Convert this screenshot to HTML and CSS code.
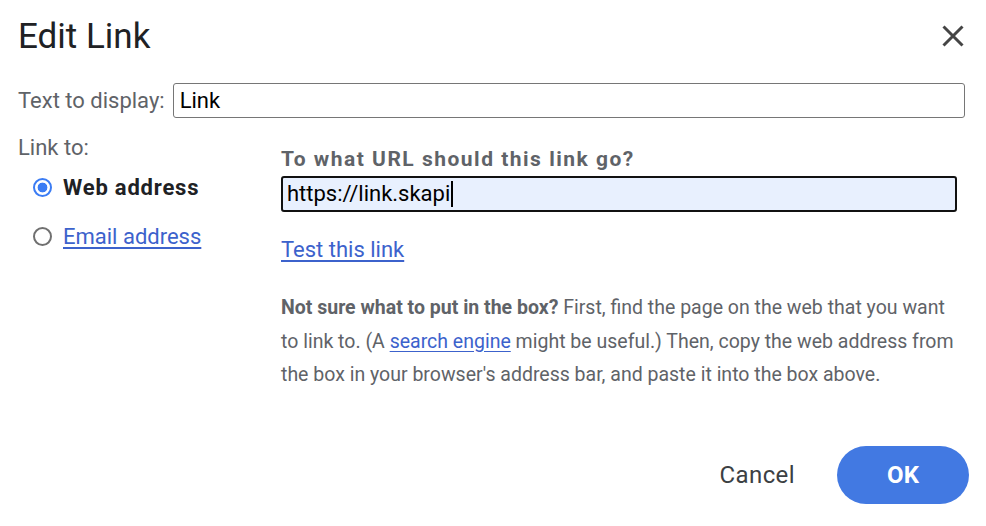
FILE: index.html
```html
<!DOCTYPE html>
<html lang="en">
<head>
<meta charset="utf-8">
<title>Edit Link</title>
<link rel="stylesheet" href="styles.css">
</head>
<body>
<div class="dialog">
  <div class="header">
    <h1 class="title">Edit Link</h1>
    <button class="close" aria-label="Close">
      <svg width="22" height="22" viewBox="0 0 22 22"><path d="M1.5 1.5 L20.5 20.5 M20.5 1.5 L1.5 20.5" stroke="#454545" stroke-width="3" fill="none"/></svg>
    </button>
  </div>
  <div class="display-row">
    <label class="label">Text to display:</label>
    <div class="text-input">Link</div>
  </div>
  <div class="body">
    <div class="left">
      <div class="label">Link to:</div>
      <div class="radios">
        <div class="radio-row">
          <span class="radio checked"></span>
          <span class="radio-text strong">Web address</span>
        </div>
        <div class="radio-row">
          <span class="radio"></span>
          <a class="radio-text link" href="#">Email address</a>
        </div>
      </div>
    </div>
    <div class="right">
      <div class="question">To what URL should this link go?</div>
      <div class="url-input"><span>https://link.skapi</span><span class="caret"></span></div>
      <a class="test-link link" href="#">Test this link</a>
      <p class="help"><b>Not sure what to put in the box?</b> First, find the page on the web that you want to link to. (A <a class="link" href="#">search engine</a> might be useful.) Then, copy the web address from the box in your browser's address bar, and paste it into the box above.</p>
    </div>
  </div>
  <div class="footer">
    <button class="btn-cancel">Cancel</button>
    <button class="btn-ok">OK</button>
  </div>
</div>
</body>
</html>
```

FILE: styles.css
```css
* { box-sizing: border-box; }
html, body { margin: 0; padding: 0; background: #fff; }
body { font-family: Roboto, "Noto Sans", "Liberation Sans", sans-serif; color: #202124; }

.dialog {
  width: 986px;
  height: 526px;
  padding: 0 17px 0 18px;
}

.header {
  display: flex;
  justify-content: space-between;
  align-items: flex-start;
  height: 57px;
}
.title {
  margin: 17px 0 0 0;
  font-size: 35px;
  line-height: 40px;
  font-weight: 400;
  color: #202124;
}
.close {
  margin: 25px 5px 0 0;
  padding: 0;
  border: 0;
  background: none;
  width: 22px;
  height: 22px;
  display: block;
}
.close svg { display: block; }

.display-row {
  display: flex;
  align-items: center;
  gap: 8px;
  margin-top: 26px;
  padding-right: 4px;
}
.label {
  font-size: 22px;
  line-height: 24px;
  color: #5f6368;
}
.text-input {
  flex: 1;
  height: 35px;
  border: 1px solid #767676;
  border-radius: 3px;
  padding: 0 6px;
  font-size: 22px;
  line-height: 33px;
  color: #000;
}

.body {
  display: grid;
  grid-template-columns: 263px 1fr;
}
.left { padding-top: 18px; }
.radios { padding-left: 15px; margin-top: 3px; }
.radio-row {
  display: flex;
  align-items: center;
  gap: 11px;
  height: 49px;
}
.radio {
  width: 19px;
  height: 19px;
  border-radius: 50%;
  border: 2px solid #707070;
  background: #fff;
  flex: none;
}
.radio.checked {
  border-color: #3b7cf4;
  background: radial-gradient(circle, #3b7cf4 0 4.6px, #fff 5.2px);
}
.radio-text { font-size: 22px; line-height: 24px; }
.strong { font-weight: 700; color: #202124; letter-spacing: 0.8px; }
.link { color: #3c62cc; text-decoration: underline; text-underline-offset: 3px; }

.right { padding-top: 29px; padding-right: 12px; }
.question {
  font-size: 21px;
  line-height: 24px;
  font-weight: 700;
  color: #5f6368;
  letter-spacing: 1.5px;
}
.url-input {
  margin-top: 5px;
  height: 36px;
  border: 2px solid #111;
  border-radius: 3px;
  background: #e8f0fe;
  padding: 0 4px;
  font-size: 22px;
  line-height: 32px;
  color: #000;
  display: flex;
  align-items: center;
}
.caret {
  display: inline-block;
  width: 2px;
  height: 26px;
  background: #000;
  margin-left: 1px;
}
.test-link {
  display: inline-block;
  margin-top: 26px;
  font-size: 22px;
  line-height: 24px;
}
.help {
  margin: 29px 0 0 0;
  font-size: 19.5px;
  line-height: 33.5px;
  color: #5f6368;
}
.help b { font-weight: 700; }

.footer {
  display: flex;
  justify-content: flex-end;
  align-items: center;
  gap: 18px;
  margin-top: 54px;
}
.btn-cancel {
  border: 0;
  background: none;
  font-family: inherit;
  font-size: 24px;
  letter-spacing: 0.4px;
  color: #3c4043;
  padding: 0 24px;
  height: 58px;
}
.btn-ok {
  border: 0;
  width: 132px;
  height: 58px;
  border-radius: 29px;
  background: #4279e2;
  color: #fff;
  font-family: inherit;
  font-size: 24px;
  font-weight: 700;
}
```
